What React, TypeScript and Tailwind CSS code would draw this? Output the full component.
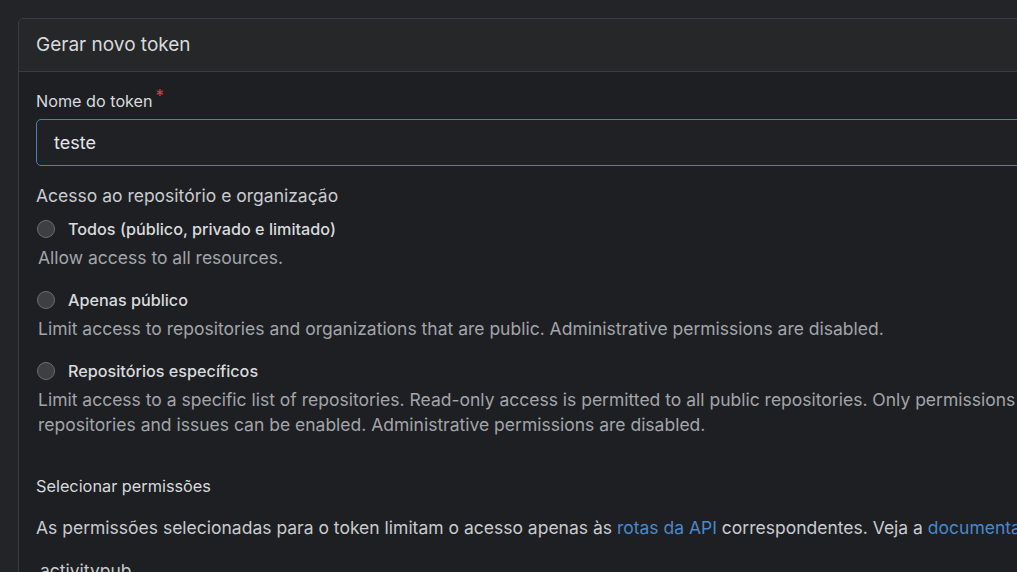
import React from 'react';

const font = { fontFamily: 'Inter, "Noto Sans", sans-serif' };

type Option = { label: string; desc: string[] };

const options: Option[] = [
  { label: 'Todos (público, privado e limitado)', desc: ['Allow access to all resources.'] },
  {
    label: 'Apenas público',
    desc: ['Limit access to repositories and organizations that are public. Administrative permissions are disabled.'],
  },
  {
    label: 'Repositórios específicos',
    desc: [
      'Limit access to a specific list of repositories. Read-only access is permitted to all public repositories. Only permissions on',
      'repositories and issues can be enabled. Administrative permissions are disabled.',
    ],
  },
];

const Radio = ({ opt }: { opt: Option }) => (
  <div className="flex flex-col">
    <label className="flex items-center gap-[13px] h-[24px]">
      <span className="w-[18px] h-[18px] rounded-full border border-[#6b6d72] bg-[#3d3f43] ml-[1px]" />
      <span className="text-[16.2px] font-[470] text-[#d8dadd]">{opt.label}</span>
    </label>
    <div className="mt-[4px] pl-[2px] text-[17.5px] leading-[25px] text-[#a3a5aa] whitespace-nowrap">
      {opt.desc.map((d) => (
        <div key={d}>{d}</div>
      ))}
    </div>
  </div>
);

export default function App() {
  return (
    <div className="h-[572px] w-[1017px] overflow-hidden bg-[#222428] pt-[18px] pl-[18px]" style={font}>
      <div className="w-[1100px] rounded-tl-[5px] border border-[#3a3c40] bg-[#1d1f22]">
        {/* header */}
        <div className="h-[53px] flex items-center px-[17px] bg-[#252729] border-b border-[#3a3c40] rounded-tl-[5px]">
          <h2 className="text-[19px] text-[#d8dadd]">Gerar novo token</h2>
        </div>

        {/* body */}
        <div className="px-[17px] pt-[18px]">
          <div className="flex items-start text-[16.2px] text-[#d8dadd] h-[22px] leading-[22px]">
            Nome do token
            <span className="ml-[3px] -mt-[2px] text-[#d0454b] text-[17px] leading-[17px]">*</span>
          </div>
          <div className="mt-[7px] h-[47px] flex items-center pl-[17px] rounded-[5px] border border-[#4a7fbb] bg-[#1f2124] text-[18px] text-[#e4e6e9]">
            teste
          </div>

          <div className="mt-[18px] text-[17.5px] text-[#c9cbcf] leading-[24px]">Acesso ao repositório e organização</div>

          <div className="mt-[9px] flex flex-col gap-[18px]">
            {options.map((o) => (
              <Radio key={o.label} opt={o} />
            ))}
          </div>

          <div className="mt-[38px] text-[16.3px] font-normal text-[#d8dadd] leading-[22px]">Selecionar permissões</div>
          <div className="mt-[19px] text-[17.5px] text-[#c9cbcf] leading-[24px] whitespace-nowrap">
            As permissões selecionadas para o token limitam o acesso apenas às{' '}
            <a className="text-[#4a88cb]">rotas da API</a> correspondentes. Veja a{' '}
            <a className="text-[#4a88cb]">documentação</a> para mais informações.
          </div>
          <div className="mt-[19px] pl-[4px] text-[17.5px] text-[#c9cbcf] leading-[24px]">activitypub</div>
        </div>
      </div>
    </div>
  );
}
